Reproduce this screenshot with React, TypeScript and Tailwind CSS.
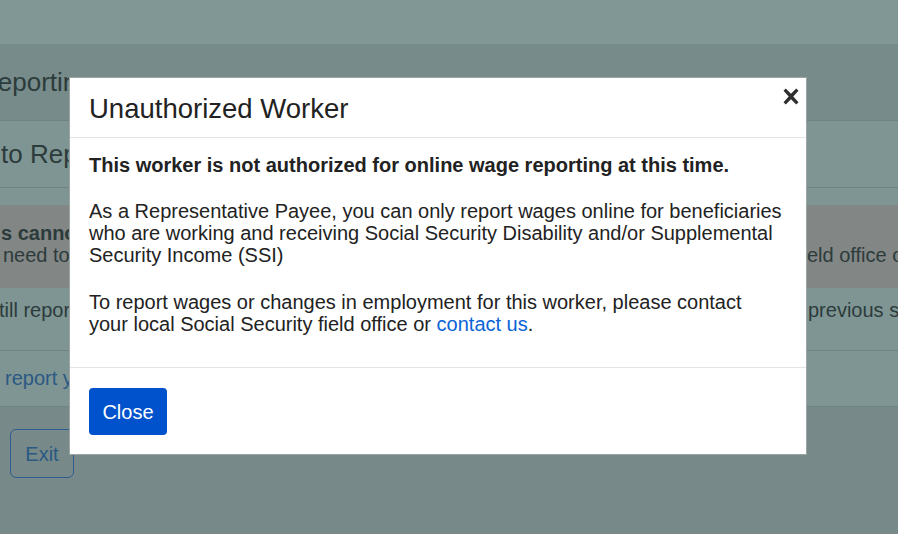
function CloseIcon() {
  // thick "times" glyph, as in the reference
  return (
    <svg width="18" height="17" viewBox="0 0 18 17" aria-hidden="true">
      <path d="M1.5 2.8 L3.8 0.5 L9 5.7 L14.2 0.5 L16.5 2.8 L11.3 8.5 L16.5 14.2 L14.2 16.5 L9 11.3 L3.8 16.5 L1.5 14.2 L6.7 8.5 Z" fill="#2f2f2f" />
    </svg>
  )
}

function Backdrop() {
  return (
    <div className="flex flex-col w-[898px] h-[534px] overflow-hidden bg-[#778a89] text-[#2c3b3b]">
      {/* top bar */}
      <div className="h-[44px] shrink-0 bg-[#819796]" />

      {/* page heading */}
      <div className="h-[77px] shrink-0 flex items-center bg-[#778c8a] border-b border-[#6f8482] whitespace-nowrap">
        <span className="-ml-[21px] text-[26px] leading-none">Reporting</span>
      </div>

      {/* sub heading */}
      <div className="h-[67px] shrink-0 flex items-center bg-[#7f9593] border-b border-[#6f8482] whitespace-nowrap">
        <span className="ml-px text-[26px] leading-none">to Report Wages</span>
      </div>

      <div className="h-[17px] shrink-0 bg-[#7f9593]" />

      {/* alert */}
      <div className="h-[83px] shrink-0 bg-[#828685] pt-[17px] text-[20px] leading-[22px] whitespace-nowrap grid grid-cols-[807px_1fr]">
        <div className="overflow-hidden">
          <div className="ml-px font-bold">s cannot be reported online</div>
          <div className="ml-[3px]">need to contact your local Social Security fi</div>
        </div>
        <div className="overflow-hidden">
          <div>&nbsp;</div>
          <div>eld office or call us</div>
        </div>
      </div>

      {/* row */}
      <div className="h-[63px] shrink-0 bg-[#7f9593] border-b border-[#6f8482] pt-[11px] text-[20px] leading-[22px] whitespace-nowrap grid grid-cols-[808px_1fr]">
        <div className="overflow-hidden">
          <span className="-ml-[11px] inline-block">still report wages for</span>
        </div>
        <div className="overflow-hidden">previous services</div>
      </div>

      {/* link row */}
      <div className="h-[56px] shrink-0 bg-[#7f9593] border-b border-[#6f8482] pt-[16px] text-[20px] leading-[22px] whitespace-nowrap overflow-hidden">
        <span className="ml-[5px] text-[#2a5983]">report your wages</span>
      </div>

      {/* actions */}
      <div className="pt-[22px] pl-[10px]">
        <button className="w-[64px] h-[49px] rounded-[6px] border border-[#2d5e8e] text-[20px] text-[#2a5983]">
          Exit
        </button>
      </div>
    </div>
  )
}

function Modal() {
  return (
    <div className="absolute left-[69px] top-[77px] w-[738px] bg-white border border-[#9aa5a4] text-[#222222]">
      {/* header */}
      <div className="relative h-[60px] flex items-center px-[19px] border-b border-[#e3e3e3]">
        <h2 className="mt-[3px] text-[27.5px] leading-none font-normal">Unauthorized Worker</h2>
        <button className="absolute right-[6px] top-[10px]" aria-label="close">
          <CloseIcon />
        </button>
      </div>

      {/* body */}
      <div className="pl-[19px] pr-[23px] pt-4 pb-[32px] text-[20px] leading-[22px]">
        <p className="font-bold mb-6">This worker is not authorized for online wage reporting at this time.</p>
        <p className="mb-[25px]">
          As a Representative Payee, you can only report wages online for beneficiaries who are working and
          receiving Social Security Disability and/or Supplemental Security Income (SSI)
        </p>
        <p>
          To report wages or changes in employment for this worker, please contact your local Social Security
          field office or <a className="text-[#0b63d6]">contact us</a>.
        </p>
      </div>

      {/* footer */}
      <div className="border-t border-[#e3e3e3] px-[19px] pt-5 pb-[19px]">
        <button className="w-[78px] h-[47px] rounded-[4px] bg-[#0052cc] text-white text-[20px]">Close</button>
      </div>
    </div>
  )
}

export default function App() {
  return (
    <div className="relative w-[898px] h-[534px] overflow-hidden [font-family:Liberation_Sans,Arial,sans-serif]">
      <Backdrop />
      <Modal />
    </div>
  )
}
